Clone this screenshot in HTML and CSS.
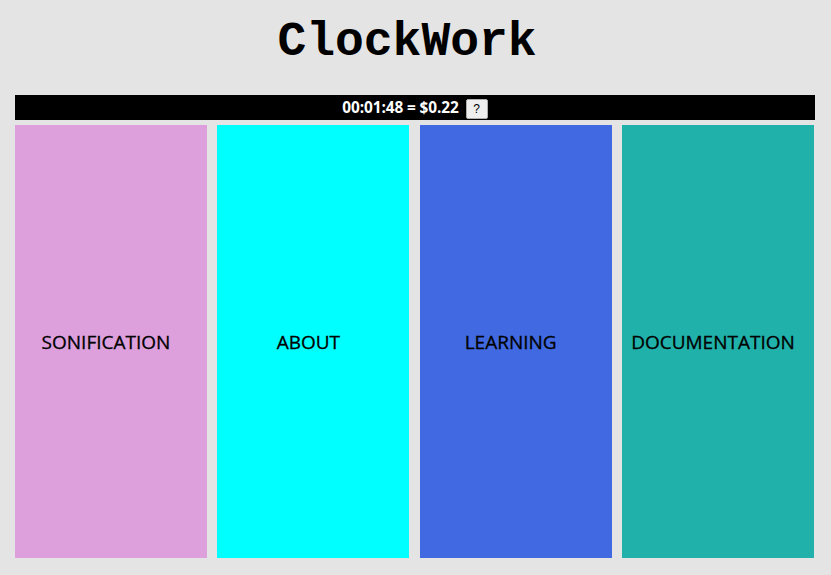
FILE: index.html
```html
<!DOCTYPE html>
<html>
<head>
<meta charset="utf-8">
<link rel="stylesheet" href="styles.css">
</head>
<body>
<div class="page">
  <h1 class="title">ClockWork</h1>
  <div class="bar">
    <span class="cost">00:01:48 = $0.22</span>
    <button class="help">?</button>
  </div>
  <div class="panels">
    <div class="panel pink">SONIFICATION</div>
    <div class="panel cyan">ABOUT</div>
    <div class="panel blue">LEARNING</div>
    <div class="panel teal">DOCUMENTATION</div>
  </div>
</div>
</body>
</html>
```
FILE: styles.css
```css
html, body {
  margin: 0;
  padding: 0;
  background: #e4e4e4;
}
.page {
  width: 800px;
  margin-left: 15px;
  display: flex;
  flex-direction: column;
}
.title {
  margin: 0;
  height: 95px;
  box-sizing: border-box;
  padding-top: 15px;
  padding-right: 16px;
  text-align: center;
  font-family: "Liberation Mono", monospace;
  font-weight: bold;
  font-size: 48px;
  line-height: 54px;
  color: #000;
}
.bar {
  height: 25px;
  background: #000;
  display: flex;
  align-items: center;
  justify-content: center;
  gap: 7px;
}
.cost {
  color: #fff;
  font-family: "Open Sans", sans-serif;
  font-weight: bold;
  font-size: 15.4px;
  letter-spacing: -0.1px;
}
.help {
  width: 22px;
  height: 20px;
  margin-top: 3px;
  padding: 0;
  background: #efefef;
  border: 1px solid #adadad;
  border-radius: 2px;
  font-family: "Liberation Sans", sans-serif;
  font-size: 12px;
  color: #000;
}
.panels {
  margin-top: 5px;
  display: flex;
  gap: 10.33px;
  height: 433px;
}
.panel {
  width: 192px;
  box-sizing: border-box;
  padding-right: 10px;
  display: flex;
  align-items: center;
  justify-content: center;
  font-family: "Open Sans", sans-serif;
  font-size: 19px;
  -webkit-text-stroke: 0.3px #000;
  color: #000;
}
.pink { background: #dda0dd; }
.cyan { background: #00ffff; }
.blue { background: #4169e1; }
.teal { background: #20b2aa; }
```
